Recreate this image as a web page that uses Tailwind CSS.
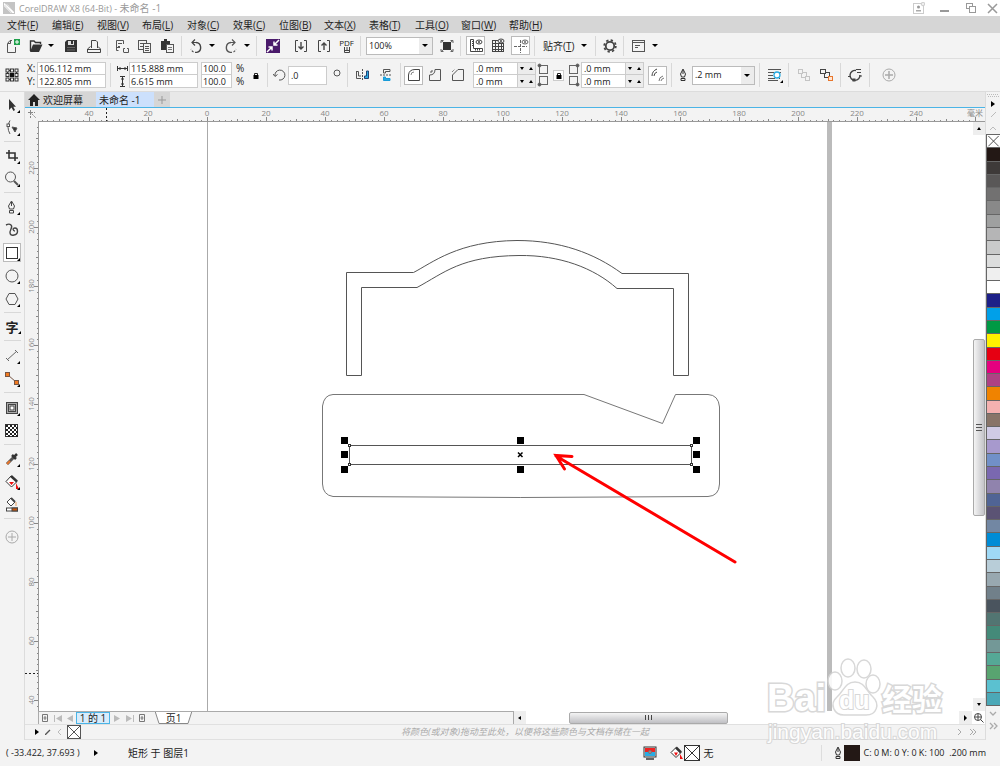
<!DOCTYPE html>
<html lang="zh-CN">
<head>
  <meta charset="UTF-8" />
  <title>CorelDRAW X8 (64-Bit) - 未命名 -1</title>
  <meta name="viewport" content="width=device-width, initial-scale=1.0">
  <script src="https://cdn.jsdelivr.net/npm/@tailwindcss/browser@4"></script>
</head>

<body class="relative flex h-screen flex-col overflow-hidden bg-[#f3f3f3] font-['Open_Sans','Noto_Sans_CJK_SC',sans-serif] text-[10px] leading-3 text-[#222]">

  <!-- 标题栏 -->
  <header class="flex h-4 shrink-0 items-center bg-white pl-[3px] text-[#999]">
    <svg class="mr-1 h-3 w-3" viewBox="0 0 12 12"><rect width="12" height="12" fill="#c4c4c4"/><path d="M1 1L5 3L11 10V11H8L1 4Z" fill="#fff"/><path d="M2 1.500L11 9M1.500 3L9 11" stroke="#bbb" stroke-width=".6"/></svg>
    <h1><span class="text-[9px]">CorelDRAW X8 (64-Bit) - </span>未命名 -1</h1>
    <div class="ml-auto flex items-center gap-[14px] pr-px">
      <button aria-label="登录"><svg class="h-3 w-3" viewBox="0 0 12 12" fill="none" stroke="#ccc"><rect x=".5" y="1.500" width="10" height="10"/><circle cx="5.500" cy="5" r="1.500" fill="#999" stroke="none"/><path d="M3 9.500V8H8V9.500Z" fill="#aaa" stroke="none"/><circle cx="10" cy="2" r="1.800" fill="#eee"/></svg></button>
      <button aria-label="最小化"><svg class="h-3 w-3" viewBox="0 0 12 12"><rect x="1" y="8" width="9" height="2" fill="#999"/></svg></button>
      <button aria-label="还原"><svg class="h-3 w-3" viewBox="0 0 12 12" fill="#fff" stroke="#999"><rect x="1.500" y="1.500" width="6" height="5"/><rect x="4.500" y="4.500" width="6" height="6"/></svg></button>
      <button aria-label="关闭" class="-ml-1"><svg class="h-3 w-3" viewBox="0 0 12 12" stroke="#999" stroke-width="1.500"><path d="M1 2L10 11M10 2L1 11"/></svg></button>
    </div>
  </header>

  <!-- 菜单 -->
  <nav class="flex h-[17px] shrink-0 items-center whitespace-nowrap bg-[#d6d6d6] pl-[7px]">
    <button class="w-[45px] text-left">文件(<u>F</u>)</button>
    <button class="w-[45px] text-left">编辑(<u>E</u>)</button>
    <button class="w-[45px] text-left">视图(<u>V</u>)</button>
    <button class="w-[45px] text-left">布局(<u>L</u>)</button>
    <button class="w-[46px] text-left">对象(<u>C</u>)</button>
    <button class="w-[46px] text-left">效果(<u>C</u>)</button>
    <button class="w-[45px] text-left">位图(<u>B</u>)</button>
    <button class="w-[45px] text-left">文本(<u>X</u>)</button>
    <button class="w-[46px] text-left">表格(<u>T</u>)</button>
    <button class="w-[46px] text-left">工具(<u>O</u>)</button>
    <button class="w-[48px] text-left">窗口(<u>W</u>)</button>
    <button class="w-[45px] text-left">帮助(<u>H</u>)</button>
  </nav>

  <!-- 标准工具栏 -->
  <div class="flex h-[26px] shrink-0 items-center border-b border-[#dedede] pl-px">
    <button aria-label="新建" class="flex w-[23px] justify-center"><svg class="h-4 w-4" viewBox="0 0 16 16" fill="none" stroke="#555"><path d="M7 2.500H5L2.500 5.500V14.500H10.500V9M5.500 3V5.500H3"/><rect x="9" y="1" width="6" height="6" fill="#1fa04b" stroke="none"/><path d="M12 2V6M10 4H14" stroke="#fff"/></svg></button>
    <button aria-label="打开" class="flex w-[23px] justify-center"><svg class="h-4 w-4" viewBox="0 0 16 16"><path d="M2.500 13V3H6L7.500 4.500H12.500V6" fill="none" stroke="#333" stroke-width="1.400"/><path d="M2 14L5 6.500H14.500L11 14Z" fill="#333"/></svg></button>
    <button aria-label="最近文件" class="flex w-3 justify-start pl-px"><svg class="h-[3px] w-[6px]" viewBox="0 0 6 3"><path d="M0 0H6L3 3Z"/></svg></button>
    <button aria-label="保存" class="flex w-[23px] justify-center"><svg class="h-4 w-4" viewBox="0 0 16 16"><path d="M2 4L4 2H14V14H2Z" fill="#333"/><rect x="5" y="3" width="6" height="4" fill="#ddd"/><rect x="8" y="3" width="2" height="3" fill="#333"/><path d="M4 9.500H12M4 12H12" stroke="#666"/></svg></button>
    <button aria-label="打印" class="flex w-[23px] justify-center"><svg class="h-4 w-4" viewBox="0 0 16 16" fill="none" stroke="#444"><path d="M5.500 10V2.500H10L11.500 4V10M4.500 8.500L1.500 11V14.500H14.500V11L12 8.500M2 11.500H14"/></svg></button>
    <i class="mx-[2px] h-5 w-px bg-[#d8d8d8]"></i>
    <button aria-label="剪切" class="flex w-[23px] justify-center"><svg class="h-4 w-4" viewBox="0 0 16 16" fill="none" stroke="#555"><path d="M4.500 12.500H2.500V2.500H9.500V6M4 5.500H8M4 8.500H6M2.500 9.500H6"/><path d="M9.500 14.500V10.500H11M13 10.500H14.500V14.500H10"/></svg></button>
    <button aria-label="复制" class="flex w-[23px] justify-center"><svg class="h-4 w-4" viewBox="0 0 16 16" fill="#f3f3f3" stroke="#555"><rect x="1.500" y="2.500" width="8" height="9"/><path d="M3 5.500H8M3 8.500H8"/><rect x="6.500" y="5.500" width="7" height="9"/><path d="M8 8.500H12M8 10.500H12M8 12.500H12"/></svg></button>
    <button aria-label="粘贴" class="flex w-[23px] justify-center"><svg class="h-4 w-4" viewBox="0 0 16 16"><path d="M1 3H4V1H7V3H10V12H1Z" fill="#333"/><rect x="6.500" y="6.500" width="7" height="8" fill="#f3f3f3" stroke="#555"/><path d="M8 9.500H12M8 11.500H12" stroke="#777"/></svg></button>
    <i class="mx-[2px] h-5 w-px bg-[#d8d8d8]"></i>
    <button aria-label="撤消" class="flex w-[23px] justify-center"><svg class="h-4 w-4" viewBox="0 0 16 16" fill="none" stroke="#444"><path d="M7 1.500L4 4.500L7 7.500M4.500 4.500H8" stroke-width="1.200"/><path d="M8 4.500A5 5 0 0 1 9 14.300" stroke-width="1.400"/><path d="M9 14.300A5 5 0 0 1 3 11" stroke-width="1.200" stroke-dasharray="2 1.500"/></svg></button>
    <button aria-label="撤消列表" class="flex w-3 justify-start pl-[2px]"><svg class="h-[3px] w-[6px]" viewBox="0 0 6 3"><path d="M0 0H6L3 3Z"/></svg></button>
    <button aria-label="重做" class="flex w-[23px] justify-center"><svg class="h-4 w-4" viewBox="0 0 16 16" fill="none" stroke="#555"><path d="M9 1.500L12 4.500L9 7.500M11.500 4.500H8" stroke-width="1.200"/><path d="M8 4.500A5 5 0 0 0 7 14.300" stroke-width="1.400"/><path d="M7 14.300A5 5 0 0 0 13 11" stroke-width="1.200" stroke-dasharray="2 1.500"/></svg></button>
    <button aria-label="重做列表" class="flex w-3 justify-start pl-[2px]"><svg class="h-[3px] w-[6px]" viewBox="0 0 6 3"><path d="M0 0H6L3 3Z"/></svg></button>
    <i class="mx-[2px] h-5 w-px bg-[#d8d8d8]"></i>
    <button aria-label="CONNECT" class="flex w-[27px] justify-center"><svg class="h-[14px] w-[14px]" viewBox="0 0 14 14"><rect width="14" height="14" fill="#4a1a6b"/><path d="M13 1L8 6M8 2.500V6H11.500M1 13L6 8M2.500 8H6V11.500" stroke="#fff" stroke-width="1.500" fill="none"/></svg></button>
    <button aria-label="导入" class="ml-[3px] flex w-[23px] justify-center"><svg class="h-4 w-4" viewBox="0 0 16 16" fill="none" stroke="#444"><path d="M5 2.500H2.500V13.500H5M11 2.500H13.500V13.500H11"/><path d="M8 4V11M5.500 8.500L8 11L10.500 8.500" stroke-width="1.400"/></svg></button>
    <button aria-label="导出" class="flex w-[23px] justify-center"><svg class="h-4 w-4" viewBox="0 0 16 16" fill="none" stroke="#444"><path d="M5 2.500H2.500V13.500H5M11 2.500H13.500V13.500H11"/><path d="M8 12V5M5.500 7.500L8 5L10.500 7.500" stroke-width="1.400"/></svg></button>
    <button aria-label="发布为 PDF" class="flex w-[23px] flex-col items-center"><span class="text-[8px] leading-[8px]">PDF</span><svg class="h-[6px] w-[8px]" viewBox="0 0 8 6" fill="none" stroke="#444"><path d="M1.500 0V5.500H6.500V0M4 0V4M2 3.500H6"/></svg></button>
    <i class="mx-[2px] h-5 w-px bg-[#d8d8d8]"></i>
    <div class="relative ml-[3px] flex h-[18px] w-[67px] items-center border border-[#bbb] bg-[#ececec]">
      <select aria-label="缩放级别" class="h-4 w-full appearance-none bg-linear-to-r from-white from-80% to-[#ececec] to-80% pl-[2px] text-[9px]"><option>100%</option></select>
      <svg class="pointer-events-none absolute right-1 h-[3px] w-[6px]" viewBox="0 0 6 3"><path d="M0 0H6L3 3Z"/></svg>
    </div>
    <button aria-label="全屏预览" class="ml-[2px] flex w-[23px] justify-center"><svg class="h-4 w-4" viewBox="0 0 16 16" fill="none" stroke="#666"><rect x="4" y="4" width="8" height="8" fill="#333" stroke="none"/><path d="M2 5V2.500H4.500M11.500 2.500H14V5M14 11V13.500H11.500M4.500 13.500H2V11M2 2.500L4 4M14 2.500L12 4M2 13.500L4 12M14 13.500L12 12"/></svg></button>
    <i class="mx-[2px] h-5 w-px bg-[#d8d8d8]"></i>
    <button aria-label="显示标尺" class="ml-[3px] flex h-[19px] w-[19px] items-center justify-center border border-[#bbb] bg-white"><svg class="h-4 w-4" viewBox="0 0 16 16" fill="none" stroke="#444"><path d="M2.500 1.500H5.500V10.500H14.500V13.500H2.500Z"/><path d="M4 3.500H5M4 5.500H5M4 7.500H5M7.500 11V12.500M9.500 11V12.500M11.500 11V12.500"/><ellipse cx="11" cy="4" rx="3" ry="2"/><circle cx="11" cy="4" r=".7"/></svg></button>
    <button aria-label="显示网格" class="flex w-[26px] justify-center"><svg class="h-4 w-4" viewBox="0 0 16 16" fill="none" stroke="#444"><path d="M2 2.500H8M2 5.500H14M2 8.500H14M2 11.500H14M2 13.500H14M2.500 2V14M5.500 2V14M8.500 6V14M11.500 6V14M13.500 6V14"/><ellipse cx="11" cy="3" rx="3" ry="2"/><circle cx="11" cy="3" r=".7"/></svg></button>
    <button aria-label="显示辅助线" class="flex h-[19px] w-[19px] items-center justify-center border border-[#bbb] bg-white"><svg class="h-4 w-4" viewBox="0 0 16 16" fill="none" stroke="#666"><path d="M7.500 2V15M1 8.500H14" stroke-dasharray="3 1"/><ellipse cx="12" cy="4" rx="3" ry="2"/><circle cx="12" cy="4" r=".7"/></svg></button>
    <i class="ml-1 mr-2 h-5 w-px bg-[#d8d8d8]"></i>
    <button class="flex items-center gap-[7px] whitespace-nowrap"><span>贴齐(<u>T</u>)</span><svg class="h-[3px] w-[6px]" viewBox="0 0 6 3"><path d="M0 0H6L3 3Z"/></svg></button>
    <i class="ml-2 mr-[2px] h-5 w-px bg-[#d8d8d8]"></i>
    <button aria-label="选项" class="flex w-[23px] justify-center"><svg class="h-4 w-4" viewBox="0 0 16 16" fill="none" stroke="#444"><circle cx="8" cy="8" r="4.200" stroke-width="1.800"/><circle cx="8" cy="8" r="5.800" stroke-width="1.800" stroke-dasharray="2.300 2.250"/></svg></button>
    <i class="mx-[2px] h-5 w-px bg-[#d8d8d8]"></i>
    <button aria-label="应用程序启动器" class="flex w-[23px] justify-center"><svg class="h-4 w-4" viewBox="0 0 16 16" fill="none" stroke="#555"><rect x="2.500" y="2.500" width="12" height="11"/><path d="M3 4.500H14M5 7.500H10M5 9.500H8"/></svg></button>
    <button aria-label="启动器列表" class="flex w-3 justify-center"><svg class="h-[3px] w-[6px]" viewBox="0 0 6 3"><path d="M0 0H6L3 3Z"/></svg></button>
  </div>

  <!-- 属性栏 -->
  <div class="flex h-[33px] shrink-0 items-center border-b border-[#dcdcdc] pl-[5px]">
    <svg class="h-[14px] w-[14px]" viewBox="0 0 14 14" fill="none" stroke="#333"><path d="M2 2.500H12M2 11.500H12M2.500 2V12M11.500 2V12" stroke-dasharray="1 1"/><g fill="#f3f3f3"><rect x="1" y="1" width="3" height="3"/><rect x="5.500" y="1" width="3" height="3"/><rect x="10" y="1" width="3" height="3"/><rect x="1" y="5.500" width="3" height="3"/><rect x="10" y="5.500" width="3" height="3"/><rect x="1" y="10" width="3" height="3"/><rect x="5.500" y="10" width="3" height="3"/><rect x="10" y="10" width="3" height="3"/></g><rect x="5" y="5" width="4" height="4" fill="#111" stroke="none"/></svg>
    <div class="ml-2 grid grid-cols-[10px_69px] items-center leading-[13px]">
      <label for="pos-x">X:</label><input id="pos-x" value="106.112 mm" class="h-[13px] min-w-0 border border-[#ccc] bg-white pl-px text-[9px]">
      <label for="pos-y">Y:</label><input id="pos-y" value="122.805 mm" class="h-[13px] min-w-0 border border-t-0 border-[#ccc] bg-white pl-px text-[9px]">
    </div>
    <i class="ml-1 mr-[6px] h-6 w-px bg-[#d8d8d8]"></i>
    <div class="grid grid-cols-[12px_69px_34px] items-center leading-[13px]">
      <svg class="h-[11px] w-[11px]" viewBox="0 0 11 11" stroke="#333" fill="none"><path d="M.5 3V8M10.500 3V8M1 5.500H10M3 4V7M8 4V7"/></svg>
      <input aria-label="宽度" value="115.888 mm" class="h-[13px] min-w-0 border border-[#ccc] bg-white pl-px text-[9px]">
      <input aria-label="水平缩放" value="100.0" class="ml-[3px] h-[13px] min-w-0 border border-[#ccc] bg-white pl-px text-[9px]">
      <svg class="h-[11px] w-[11px]" viewBox="0 0 11 11" stroke="#333" fill="none"><path d="M3 .5H8M3 10.500H8M5.500 1V10M4 3H7M4 8H7"/></svg>
      <input aria-label="高度" value="6.615 mm" class="h-[13px] min-w-0 border border-t-0 border-[#ccc] bg-white pl-px text-[9px]">
      <input aria-label="垂直缩放" value="100.0" class="ml-[3px] h-[13px] min-w-0 border border-t-0 border-[#ccc] bg-white pl-px text-[9px]">
    </div>
    <div class="ml-1 w-3 leading-[13px]">%<br>%</div>
    <button aria-label="锁定比率" class="flex w-4 justify-center"><svg class="h-[7px] w-[6px]" viewBox="0 0 6 7"><rect x=".5" y="3" width="5" height="4"/><path d="M1.500 3V1.500H4.500V3" fill="none" stroke="#222"/></svg></button>
    <i class="mx-[3px] h-6 w-px bg-[#d8d8d8]"></i>
    <svg class="ml-[2px] h-[14px] w-[14px]" viewBox="0 0 14 14" fill="none" stroke="#555"><path d="M2 8A5 5 0 1 1 6 12M0 6L2 8.500L4.500 6.500"/></svg>
    <input aria-label="旋转角度" value=".0" class="ml-px h-[19px] w-[39px] border border-[#ccc] bg-white pl-[2px] text-[9px]">
    <svg class="mx-[6px] mb-1 h-2 w-2" viewBox="0 0 8 8"><circle cx="4" cy="4" r="3" fill="none" stroke="#555"/></svg>
    <i class="h-6 w-px bg-[#d8d8d8]"></i>
    <button aria-label="水平镜像" class="ml-[3px] flex w-[23px] justify-center"><svg class="h-4 w-4" viewBox="0 0 16 16" fill="none" stroke="#555"><path d="M7.500 2V14" stroke-dasharray="2 1"/><path d="M1.500 4V11.500H6M1.500 4.500H3.500V9H6"/><path d="M13.500 4V11.500H9.500V9H11.500V4Z" fill="#29abe2" stroke="#247"/></svg></button>
    <button aria-label="垂直镜像" class="flex w-[23px] justify-center"><svg class="h-4 w-4" viewBox="0 0 16 16" fill="none" stroke="#555"><path d="M2 8H14" stroke-dasharray="2 1"/><path d="M12 2.500H5.500V6H7.500V4.500H12Z"/><path d="M12 13.500H5.500V10H7.500V11.500H12Z" fill="#29abe2" stroke="#189bd8"/></svg></button>
    <i class="mx-[3px] h-6 w-px bg-[#d8d8d8]"></i>
    <button aria-label="圆角" class="flex h-[19px] w-[19px] items-center justify-center border border-[#bbb] bg-white"><svg class="h-4 w-4" viewBox="0 0 16 16" fill="none" stroke="#444"><path d="M2.500 13.500V8Q3 2.500 9 2.500H13.500V13.500Z"/><path d="M5 8Q5 5 8 5" stroke="#888"/></svg></button>
    <button aria-label="扇形角" class="flex w-[23px] justify-center"><svg class="h-4 w-4" viewBox="0 0 16 16" fill="none" stroke="#555"><path d="M2.500 13.500V8Q8 8 8 2.500H13.500V13.500H2.500M3 5H5V3" /></svg></button>
    <button aria-label="倒棱角" class="flex w-[23px] justify-center"><svg class="h-4 w-4" viewBox="0 0 16 16" fill="none" stroke="#555"><path d="M2.500 13.500V8L8 2.500H13.500V13.500Z"/><path d="M2 5L5 2" stroke-dasharray="1 1"/></svg></button>
    <div class="ml-1 grid grid-cols-[45px_18px]">
      <input aria-label="左上角半径" value=".0 mm" class="h-[13px] min-w-0 border border-[#ccc] bg-white pl-[2px] text-[9px]">
      <div class="flex items-center justify-around border border-l-0 border-[#ccc] bg-[#ececec]"><button aria-label="减小"><svg class="h-[3px] w-1" viewBox="0 0 4 3"><path d="M0 0H4L2 3Z"/></svg></button><button aria-label="增大"><svg class="h-[3px] w-1" viewBox="0 0 4 3"><path d="M0 3H4L2 0Z"/></svg></button></div>
      <input aria-label="左下角半径" value=".0 mm" class="h-[13px] min-w-0 border border-t-0 border-[#ccc] bg-white pl-[2px] text-[9px]">
      <div class="flex items-center justify-around border border-l-0 border-t-0 border-[#ccc] bg-[#ececec]"><button aria-label="减小"><svg class="h-[3px] w-1" viewBox="0 0 4 3"><path d="M0 0H4L2 3Z"/></svg></button><button aria-label="增大"><svg class="h-[3px] w-1" viewBox="0 0 4 3"><path d="M0 3H4L2 0Z"/></svg></button></div>
    </div>
    <svg class="ml-px h-6 w-3" viewBox="0 0 12 24" fill="none" stroke="#666"><rect x="2.500" y="2.500" width="8" height="8"/><rect x="2.500" y="13.500" width="8" height="8"/><circle cx="2.500" cy="2.500" r="1.500" fill="#555"/><circle cx="2.500" cy="21.500" r="1.500" fill="#555"/></svg>
    <button aria-label="同时编辑所有角" class="mx-1 flex h-[11px] w-[11px] items-center justify-center border border-[#ccc] bg-white"><svg class="h-[7px] w-[6px]" viewBox="0 0 6 7"><rect x=".5" y="3" width="5" height="4"/><path d="M1.500 3V1.500H4.500V3" fill="none" stroke="#222"/></svg></button>
    <svg class="h-6 w-3" viewBox="0 0 12 24" fill="none" stroke="#666"><rect x="1.500" y="2.500" width="8" height="8"/><rect x="1.500" y="13.500" width="8" height="8"/><circle cx="9.500" cy="2.500" r="1.500" fill="#555"/><circle cx="9.500" cy="21.500" r="1.500" fill="#555"/></svg>
    <div class="ml-px grid grid-cols-[45px_18px]">
      <input aria-label="右上角半径" value=".0 mm" class="h-[13px] min-w-0 border border-[#ccc] bg-white pl-[2px] text-[9px]">
      <div class="flex items-center justify-around border border-l-0 border-[#ccc] bg-[#ececec]"><button aria-label="减小"><svg class="h-[3px] w-1" viewBox="0 0 4 3"><path d="M0 0H4L2 3Z"/></svg></button><button aria-label="增大"><svg class="h-[3px] w-1" viewBox="0 0 4 3"><path d="M0 3H4L2 0Z"/></svg></button></div>
      <input aria-label="右下角半径" value=".0 mm" class="h-[13px] min-w-0 border border-t-0 border-[#ccc] bg-white pl-[2px] text-[9px]">
      <div class="flex items-center justify-around border border-l-0 border-t-0 border-[#ccc] bg-[#ececec]"><button aria-label="减小"><svg class="h-[3px] w-1" viewBox="0 0 4 3"><path d="M0 0H4L2 3Z"/></svg></button><button aria-label="增大"><svg class="h-[3px] w-1" viewBox="0 0 4 3"><path d="M0 3H4L2 0Z"/></svg></button></div>
    </div>
    <button aria-label="相对角缩放" class="ml-1 flex h-[19px] w-[19px] items-center justify-center border border-[#bbb] bg-white"><svg class="h-4 w-4" viewBox="0 0 16 16" fill="none" stroke="#444"><path d="M2 9Q2 4 7 2M4 9Q4 6 7 5"/><path d="M9 14Q9 10 13 9M11 14Q11 12 14 11" stroke="#777"/></svg></button>
    <i class="mx-1 h-6 w-px bg-[#d8d8d8]"></i>
    <svg class="ml-[3px] h-[14px] w-2" viewBox="0 0 8 14" fill="none" stroke="#333"><path d="M4 1L6.500 6L5.500 9H2.500L1.500 6ZM4 2V6M2 10.500H6V12.500H2Z"/></svg>
    <div class="relative ml-[5px] flex h-[19px] w-[63px] items-center border border-[#bbb] bg-[#ececec]">
      <select aria-label="轮廓宽度" class="h-[17px] w-full appearance-none bg-linear-to-r from-white from-78% to-[#ececec] to-78% pl-[2px] text-[9px]"><option>.2 mm</option></select>
      <svg class="pointer-events-none absolute right-1 h-[3px] w-[6px]" viewBox="0 0 6 3"><path d="M0 0H6L3 3Z"/></svg>
    </div>
    <i class="mx-1 h-6 w-px bg-[#d8d8d8]"></i>
    <button aria-label="文本换行" class="flex w-[21px] justify-center"><svg class="h-4 w-4" viewBox="0 0 16 16" fill="none" stroke="#555"><path d="M1 2.500H14M1 5.500H7M1 8.500H6M1 11.500H8M1 13.500H11M12 5.500H14M12 11.500H13"/><circle cx="10" cy="8" r="3" fill="#fff" stroke="#29abe2" stroke-width="1.300"/><path d="M16 13V16H13Z" fill="#000" stroke="none"/></svg></button>
    <i class="mx-[3px] h-6 w-px bg-[#d8d8d8]"></i>
    <button aria-label="到图层前面" class="flex w-[23px] justify-center"><svg class="h-4 w-4" viewBox="0 0 16 16" fill="#f3f3f3" stroke="#c4c4c4"><rect x="5.500" y="5.500" width="5" height="5"/><rect x="2.500" y="2.500" width="4" height="4"/><rect x="9.500" y="9.500" width="4" height="4"/></svg></button>
    <button aria-label="到图层后面" class="flex w-[23px] justify-center"><svg class="h-4 w-4" viewBox="0 0 16 16" fill="#f3f3f3" stroke="#444"><rect x="5.500" y="5.500" width="5" height="5"/><rect x="1.500" y="2.500" width="5" height="4"/><rect x="9.500" y="9.500" width="4" height="4" fill="#ffe4d0" stroke="#e8762c"/></svg></button>
    <i class="mx-[2px] h-6 w-px bg-[#d8d8d8]"></i>
    <button aria-label="转换为曲线" class="flex w-6 justify-center"><svg class="h-4 w-4" viewBox="0 0 16 16" fill="none" stroke="#444"><path d="M9 3.500A5 5 0 1 0 13 8" stroke-width="1.400"/><path d="M9 2.500H14M10 5.500H14M1 9.500H4M12 9H15" /><rect x="6" y="12" width="2" height="2" fill="#444"/></svg></button>
    <i class="mx-[2px] h-6 w-px bg-[#d8d8d8]"></i>
    <button aria-label="快速自定义" class="ml-[3px] flex w-[27px] justify-center"><svg class="h-[14px] w-[14px]" viewBox="0 0 14 14" fill="none" stroke="#aaa"><circle cx="7" cy="7" r="6"/><path d="M7 3V11M3 7H11" stroke-width="1.500"/></svg></button>
  </div>

  <div class="flex min-h-0 flex-1">

    <!-- 工具箱 -->
    <aside class="flex w-[25px] shrink-0 flex-col items-center border-r border-[#dcdcdc] pt-px">
      <button aria-label="选择工具" class="flex h-[23px] shrink-0 items-center"><svg class="h-[18px] w-[18px]" viewBox="0 0 18 18"><path d="M6 3V14L8.500 11.500L10.500 15L12 14L10.300 10.800H13Z" fill="#333"/><path d="M17 14V17H14Z"/></svg></button>
      <button aria-label="形状工具" class="flex h-[23px] shrink-0 items-center"><svg class="h-[18px] w-[18px]" viewBox="0 0 18 18" fill="none" stroke="#555"><path d="M7 1.500Q3 8 7 15"/><rect x="4" y="5" width="2.500" height="2.500" fill="#fff"/><path d="M9 8L14 9L12 13Z" fill="#333"/><path d="M17 14V17H14Z" fill="#000" stroke="none"/></svg></button>
      <i class="my-[2px] h-px w-[17px] shrink-0 bg-[#d8d8d8]"></i>
      <button aria-label="裁剪工具" class="flex h-[23px] shrink-0 items-center"><svg class="h-[18px] w-[18px]" viewBox="0 0 18 18" fill="none" stroke="#333" stroke-width="1.600"><path d="M6 3V11H15M3 6H12V14"/><path d="M17 14V17H14Z" fill="#000" stroke="none"/></svg></button>
      <button aria-label="缩放工具" class="flex h-[23px] shrink-0 items-center"><svg class="h-[18px] w-[18px]" viewBox="0 0 18 18" fill="none" stroke="#555"><circle cx="7.500" cy="7" r="5"/><path d="M11 11L15 15" stroke-width="2"/><path d="M17 14V17H14Z" fill="#000" stroke="none"/></svg></button>
      <i class="my-[2px] h-px w-[17px] shrink-0 bg-[#d8d8d8]"></i>
      <button aria-label="钢笔工具" class="flex h-[23px] shrink-0 items-center"><svg class="h-[18px] w-[18px]" viewBox="0 0 18 18" fill="none" stroke="#444"><path d="M8.500 3L11.500 8L10.500 11H6.500L5.500 8ZM8.500 4V8M6.500 12.500H10.500V15H6.500Z"/><path d="M17 14V17H14Z" fill="#000" stroke="none"/></svg></button>
      <button aria-label="手绘工具" class="flex h-[23px] shrink-0 items-center"><svg class="h-[18px] w-[18px]" viewBox="0 0 18 18" fill="none" stroke="#444" stroke-width="1.400"><path d="M3 4C7 2 10 4 8 8C6 12 7 15 11 14C16 13 15 7 12 7C9 7 10 10 12 10"/></svg></button>
      <button aria-label="矩形工具" class="my-[2px] flex h-[19px] w-[18px] shrink-0 items-center border border-[#bbb] bg-white"><svg class="h-4 w-4" viewBox="1 1 16 16" fill="none" stroke="#333"><rect x="3.500" y="3.500" width="11" height="11"/><path d="M17 14V17H14Z" fill="#000" stroke="none"/></svg></button>
      <button aria-label="椭圆形工具" class="flex h-[23px] shrink-0 items-center"><svg class="h-[18px] w-[18px]" viewBox="0 0 18 18" fill="none" stroke="#555"><circle cx="9" cy="9" r="6"/><path d="M17 14V17H14Z" fill="#000" stroke="none"/></svg></button>
      <button aria-label="多边形工具" class="flex h-[23px] shrink-0 items-center"><svg class="h-[18px] w-[18px]" viewBox="0 0 18 18" fill="none" stroke="#555"><path d="M6 3.500H12L15 9L12 14.500H6L3 9Z"/><path d="M17 14V17H14Z" fill="#000" stroke="none"/></svg></button>
      <i class="my-[2px] h-px w-[17px] shrink-0 bg-[#d8d8d8]"></i>
      <button aria-label="文本工具" class="relative flex h-[23px] w-[18px] shrink-0 items-center justify-center text-[13px] font-bold">字<svg class="absolute bottom-1 right-0 h-[3px] w-[3px]" viewBox="0 0 3 3"><path d="M3 0V3H0Z"/></svg></button>
      <i class="mb-[3px] mt-[2px] h-px w-[17px] shrink-0 bg-[#d8d8d8]"></i>
      <button aria-label="平行度量工具" class="flex h-[23px] shrink-0 items-center"><svg class="h-[18px] w-[18px]" viewBox="0 0 18 18" fill="none" stroke="#666"><path d="M4 13L14 4M3 11L6 14M12 3L15 6"/><path d="M17 14V17H14Z" fill="#000" stroke="none"/></svg></button>
      <button aria-label="直线连接器工具" class="flex h-[23px] shrink-0 items-center"><svg class="h-[18px] w-[18px]" viewBox="0 0 18 18" fill="#f07a20" stroke="#754"><path d="M5 5L13 12"/><rect x="2.500" y="2.500" width="4" height="4"/><rect x="11.500" y="10.500" width="4" height="4"/><path d="M17 14V17H14Z" fill="#000" stroke="none"/></svg></button>
      <i class="mb-[3px] mt-[2px] h-px w-[17px] shrink-0 bg-[#d8d8d8]"></i>
      <button aria-label="轮廓图工具" class="flex h-[23px] shrink-0 items-center"><svg class="h-[18px] w-[18px]" viewBox="0 0 18 18" fill="#aaa" stroke="#444"><rect x="3.500" y="3.500" width="11" height="11"/><rect x="5.500" y="5.500" width="7" height="7" fill="#ddd"/><rect x="7" y="7" width="4" height="4" fill="#fff"/><path d="M17 14V17H14Z" fill="#000" stroke="none"/></svg></button>
      <button aria-label="透明度工具" class="flex h-[23px] shrink-0 items-center"><svg class="h-[18px] w-[18px]" viewBox="0 0 18 18"><rect x="2.500" y="2.500" width="12" height="12" fill="#fff" stroke="#333"/><path d="M3 4H15M3 8H15M3 12H15" stroke="#222" stroke-width="2" stroke-dasharray="2 2"/><path d="M5 6H15M5 10H15M5 14H15" stroke="#222" stroke-width="2" stroke-dasharray="2 2"/></svg></button>
      <i class="my-[2px] h-px w-[17px] shrink-0 bg-[#d8d8d8]"></i>
      <button aria-label="颜色滴管工具" class="flex h-[23px] shrink-0 items-center"><svg class="h-[18px] w-[18px]" viewBox="0 0 18 18" fill="none"><path d="M4 14L11 7" stroke="#555" stroke-width="3"/><path d="M4 14L7 11" stroke="#e8762c" stroke-width="2"/><path d="M9 5L13 9M11 7L14 4" stroke="#333" stroke-width="2.500"/><path d="M17 14V17H14Z" fill="#000"/></svg></button>
      <button aria-label="交互式填充工具" class="flex h-[23px] shrink-0 items-center"><svg class="h-[18px] w-[18px]" viewBox="0 0 18 18" fill="#fff" stroke="#333"><path d="M8 3L14 8.500L8.500 14L3 8.500Z"/><path d="M8 3L14 8.500" stroke-width="2.500"/><path d="M6 9H11L8.500 12ZM13 10L16 16H13Z" fill="#e11" stroke="none"/><path d="M17 14V17H14Z" fill="#000" stroke="none"/></svg></button>
      <button aria-label="智能填充工具" class="flex h-[23px] shrink-0 items-center"><svg class="h-[18px] w-[18px]" viewBox="0 0 18 18" fill="#fff" stroke="#444"><path d="M8 2L12 6L8 10L4 6Z"/><path d="M8 2L12 6" stroke-width="2"/><path d="M13 6V10" stroke="#e8a060"/><rect x="3.500" y="12" width="11" height="3"/><rect x="9" y="12" width="5.500" height="3" fill="#c8540c"/></svg></button>
      <i class="my-[2px] h-px w-[17px] shrink-0 bg-[#d8d8d8]"></i>
      <button aria-label="自定义工具箱" class="mt-1 flex h-[23px] shrink-0 items-center"><svg class="h-[14px] w-[14px]" viewBox="0 0 14 14" fill="none" stroke="#aaa"><circle cx="7" cy="7" r="6"/><path d="M7 3V11M3 7H11"/></svg></button>
    </aside>

    <main class="flex min-w-0 flex-1 flex-col">
      <!-- 文档标签 -->
      <div class="flex h-4 shrink-0 items-stretch border-b border-[#4ab4e6] bg-[#e8e8e8]">
        <button class="flex w-[71px] items-center gap-[3px] bg-[#d6d6d6] pl-[3px]"><svg class="h-3 w-3" viewBox="0 0 12 12" fill="#222"><path d="M6 0L12 6H10V12H7V8H5V12H2V6H0Z"/></svg>欢迎屏幕</button>
        <button class="w-[58px] bg-[#cce0fc] pl-[3px] text-left">未命名 -1</button>
        <button aria-label="新建文档" class="flex w-4 items-center justify-center bg-[#d6d6d6]"><svg class="h-2 w-2" viewBox="0 0 8 8" stroke="#999"><path d="M4 0V8M0 4H8"/></svg></button>
      </div>

      <!-- 水平标尺 -->
      <div class="flex h-[14px] shrink-0">
        <svg class="h-[13px] w-[13px] shrink-0" viewBox="0 0 13 13" fill="none" stroke="#888"><path d="M3 4.500H10M5.500 2V10M5 4L11 10" stroke-dasharray="2 1"/></svg>
        <svg id="ruler-h" class="h-full min-w-0 flex-1 border-b border-[#999] font-['Open_Sans','Noto_Sans_CJK_SC',sans-serif] text-[8px]" fill="#888"></svg>
      </div>

      <div class="flex min-h-0 flex-1">
        <svg id="ruler-v" class="h-full w-[14px] shrink-0 border-r border-[#999] font-['Open_Sans',sans-serif] text-[8px]" fill="#888"></svg>

        <!-- 绘图区 -->
        <svg class="h-full min-w-0 flex-1 bg-white" fill="none">
          <g transform="translate(-39 -122)">
            <path d="M207.500 122V900" stroke="#aaa"/>
            <rect x="827" y="122" width="5" height="900" fill="#bbb"/>
            <g stroke="#555">
              <path d="M346.500 375.500V272.500H413.500C432 263 458 241 517 240.500C560 240.500 594 253 622 273.500H688.500V375.500H673.500V288.500H617C594 268 560 255 519 255.500C461 256 444 273 417 287.500H361.500V375.500Z"/>
              <path d="M333 394.500H584L662.500 423.500L675.500 394.500H708Q718.500 395 719.500 407V484Q719 496 708 496.500Q520 498.500 333 496.500Q323 495 322.500 484V406Q324 395 333 394.500Z" stroke="#777"/>
              <rect x="349.500" y="445.500" width="342" height="19"/>
            </g>
            <g fill="#fff" stroke="#333">
              <rect x="348.500" y="444.500" width="2" height="2"/><rect x="690.500" y="444.500" width="2" height="2"/>
              <rect x="348.500" y="463.500" width="2" height="2"/><rect x="690.500" y="463.500" width="2" height="2"/>
            </g>
            <g fill="#000">
              <rect x="341" y="437" width="7" height="7"/><rect x="517" y="437" width="7" height="7"/><rect x="693" y="437" width="7" height="7"/>
              <rect x="341" y="451" width="7" height="7"/><rect x="693" y="451" width="7" height="7"/>
              <rect x="341" y="466" width="7" height="7"/><rect x="517" y="466" width="7" height="7"/><rect x="693" y="466" width="7" height="7"/>
            </g>
            <path d="M518 452.500L522.500 457M522.500 452.500L518 457" stroke="#000" stroke-width="1.500"/>
            <path d="M735 562L556 456M572 456.500L556 455.500L564.500 469" stroke="#f00" stroke-width="3" stroke-linecap="round"/>
          </g>
        </svg>

        <!-- 垂直滚动条 -->
        <div class="flex w-[13px] shrink-0 flex-col items-end bg-white">
          <button aria-label="向上滚动" class="flex h-[13px] w-3 items-center justify-center bg-[#eee]"><svg class="h-[3px] w-1" viewBox="0 0 4 3"><path d="M0 3H4L2 0Z"/></svg></button>
          <div class="flex w-full flex-[204]"></div>
          <div class="flex w-3 flex-[176] items-center justify-center rounded-[2px] border border-[#aaa] bg-linear-to-r from-[#f4f4f4] to-[#c4c4c8]"><svg class="h-[7px] w-[6px]" viewBox="0 0 6 7" stroke="#555"><path d="M0 .5H6M0 3.500H6M0 6.500H6"/></svg></div>
          <div class="flex w-full flex-[182]"></div>
          <button aria-label="向下滚动" class="flex h-[13px] w-3 items-center justify-center bg-[#eee]"><svg class="h-[3px] w-1" viewBox="0 0 4 3"><path d="M0 0H4L2 3Z"/></svg></button>
        </div>
      </div>

      <!-- 页面导航 -->
      <div class="flex h-[13px] shrink-0 items-stretch pl-[13px]">
        <div class="flex flex-[475] items-center overflow-hidden whitespace-nowrap border-l border-r border-t border-[#aaa]">
          <button aria-label="在前面添加页" class="flex w-3 justify-center"><svg class="h-2 w-2" viewBox="0 0 8 8" fill="none" stroke="#777"><path d="M1.500 .5H6.500V7.500H1.500ZM4 2V6M2.500 4H5.500"/></svg></button>
          <button aria-label="第一页" class="flex w-[13px] justify-center"><svg class="h-[7px] w-2" viewBox="0 0 8 7" fill="#bbb"><path d="M0 0H1V7H0ZM8 0V7L2 3.500Z"/></svg></button>
          <button aria-label="上一页" class="flex w-3 justify-center"><svg class="h-[7px] w-[6px]" viewBox="0 0 6 7" fill="#bbb"><path d="M6 0V7L0 3.500Z"/></svg></button>
          <span class="flex h-3 w-[34px] items-center justify-center border border-[#4ab4e6] bg-[#d9ecfb]">1 的 1</span>
          <button aria-label="下一页" class="flex w-[13px] justify-center"><svg class="h-[7px] w-[6px]" viewBox="0 0 6 7" fill="#bbb"><path d="M0 0V7L6 3.500Z"/></svg></button>
          <button aria-label="最后一页" class="flex w-[13px] justify-center"><svg class="h-[7px] w-2" viewBox="0 0 8 7" fill="#bbb"><path d="M7 0H8V7H7ZM0 0V7L6 3.500Z"/></svg></button>
          <button aria-label="在后面添加页" class="flex w-3 justify-center"><svg class="h-2 w-2" viewBox="0 0 8 8" fill="none" stroke="#777"><path d="M1.500 .5H6.500V7.500H1.500ZM4 2V6M2.500 4H5.500"/></svg></button>
          <button class="relative ml-[7px] flex h-3 w-[37px] items-center justify-center"><svg class="absolute inset-0 h-full w-full" viewBox="0 0 37 12"><path d="M0 -1L4 11.500H33L37 -1Z" fill="#fff" stroke="#888"/></svg><span class="relative">页1</span></button>
        </div>
        <div class="flex flex-[459] items-center bg-white">
          <button aria-label="向左滚动" class="flex h-full w-3 shrink-0 items-center justify-center bg-[#eee]"><svg class="h-1 w-[3px]" viewBox="0 0 3 4"><path d="M3 0V4L0 2Z"/></svg></button>
          <div class="flex-[43]"></div>
          <div class="flex h-3 flex-[158] items-center justify-center rounded-[2px] border border-[#aaa] bg-linear-to-b from-[#f4f4f4] to-[#c0c0c4]"><svg class="h-[5px] w-[7px]" viewBox="0 0 7 5" stroke="#444"><path d="M.5 0V5M3.500 0V5M6.500 0V5"/></svg></div>
          <div class="flex-[233]"></div>
          <button aria-label="向右滚动" class="flex h-full w-[13px] shrink-0 items-center justify-center bg-[#eee]"><svg class="h-[6px] w-[3px]" viewBox="0 0 3 6"><path d="M0 0V6L3 3Z"/></svg></button>
        </div>
        <button aria-label="导航器" class="flex w-[13px] shrink-0 items-center justify-center bg-white"><svg class="h-[10px] w-[10px]" viewBox="0 0 10 10" fill="none" stroke="#444"><circle cx="4" cy="4" r="3.500"/><path d="M4 1V7M1 4H7M6.500 6.500L9.500 9.500"/></svg></button>
      </div>

      <!-- 文档调色板 -->
      <div class="flex h-4 shrink-0 items-center border-b border-t border-[#e0e0e0] pl-[10px]">
        <svg class="h-[6px] w-1" viewBox="0 0 4 6"><path d="M0 0V6L4 3Z"/></svg>
        <svg class="ml-[6px] h-[6px] w-[6px]" viewBox="0 0 6 6" stroke="#555" stroke-width="1.300"><path d="M0 6L5 1"/></svg>
        <svg class="ml-[6px] h-[6px] w-[5px]" viewBox="0 0 5 6" fill="none" stroke="#bbb"><path d="M4 0L1 3L4 6"/></svg>
        <button aria-label="无颜色" class="ml-[5px]"><svg class="h-[14px] w-[14px]" viewBox="0 0 14 14" fill="#fff" stroke="#555"><rect x=".5" y=".5" width="13" height="13"/><path d="M1 1L13 13M13 1L1 13"/></svg></button>
        <p class="flex-1 pl-3 text-center text-[9px] italic text-[#aaa]">将颜色(或对象)拖动至此处，以便将这些颜色与文档存储在一起</p>
        <svg class="mr-2 h-2 w-[20px] shrink-0" viewBox="0 0 20 8" fill="none" stroke="#aaa"><path d="M1 1L4 4L1 7M13 1L16 4L13 7M16 1L19 4L16 7"/></svg>
      </div>
    </main>

    <!-- 调色板 -->
    <aside class="flex w-[15px] shrink-0 flex-col items-center border-l border-[#dcdcdc]">
      <svg class="h-[42px] w-[14px] shrink-0" viewBox="0 0 14 42" fill="none" stroke="#bbb"><path d="M1 2.500H13M2 4.500H13" stroke-dasharray="1 1"/><path d="M5 9V15L9 12Z" fill="#000" stroke="none"/><path d="M5 25L10 20M4 38L7 35L10 38"/></svg>
      <div id="palette" class="flex min-h-0 w-full flex-1 flex-col border-b border-l border-[#666]"></div>
      <svg class="h-[34px] w-[14px] shrink-0" viewBox="0 0 14 34" fill="none" stroke="#aaa" stroke-width="1.300"><path d="M4 6L7 9L10 6M4 17L7 20L4 23M8 17L11 20L8 23"/></svg>
    </aside>
  </div>

  <!-- 状态栏 -->
  <footer class="flex h-[26px] shrink-0 items-center whitespace-nowrap pl-[6px] pr-[14px]">
    <span class="w-[88px] text-[9px]">( -33.422, 37.693 )</span>
    <svg class="h-[6px] w-1" viewBox="0 0 4 6"><path d="M0 0V6L4 3Z"/></svg>
    <span class="ml-[30px]">矩形 于 图层1</span>
    <div class="ml-auto flex items-center">
      <svg class="h-[14px] w-[14px]" viewBox="0 0 14 14"><rect x="1" y="1" width="12" height="10" fill="#eee" stroke="#333"/><rect x="2" y="2" width="10" height="4" fill="#e22"/><rect x="2" y="6" width="10" height="4" fill="#29abe2"/><circle cx="7" cy="6" r="1.500" fill="#a88" stroke="#777"/><path d="M3 13H11" stroke="#333" stroke-width="1.500"/></svg>
      <svg class="ml-[13px] h-[14px] w-[14px]" viewBox="0 0 14 14" fill="#fff" stroke="#333"><path d="M6 1.500L11 6.500L6 11.500L1 6.500Z"/><path d="M6 1.500L11 6.500" stroke-width="2.500"/><path d="M4 6.500H8L6 10ZM10 8L13 13H10Z" fill="#e11" stroke="none"/></svg>
      <svg class="h-4 w-4" viewBox="0 0 16 16" fill="#fff" stroke="#333"><rect x=".5" y=".5" width="15" height="15"/><path d="M1 1L15 15M15 1L1 15"/></svg>
      <span class="ml-1 w-[117px]">无</span>
      <i class="h-4 w-px bg-[#ddd]"></i>
      <svg class="ml-3 h-[14px] w-2" viewBox="0 0 8 14" fill="none" stroke="#333"><path d="M4 1L6.500 6L5.500 9H2.500L1.500 6ZM4 2V6M2 10.500H6V12.500H2Z"/></svg>
      <span class="ml-[2px] h-4 w-4 bg-[#231815]"></span>
      <span class="ml-1 whitespace-pre text-[9px]">C: 0 M: 0 Y: 0 K: 100  .200 mm</span>
    </div>
  </footer>

  <!-- 水印 -->
  <svg class="pointer-events-none absolute bottom-5 right-[50px] h-[92px] w-[186px] font-['Liberation_Sans','Noto_Sans_CJK_SC',sans-serif] opacity-90" viewBox="0 0 186 92" fill="#fff" stroke="#d4d4d4" stroke-width="2" paint-order="stroke">
    <text x="3" y="57" font-size="38" font-weight="700" stroke-width="3">Bai</text>
    <g paint-order="normal" stroke-width="1.500">
      <ellipse cx="84" cy="14" rx="7" ry="9"/><ellipse cx="100" cy="15" rx="7" ry="9"/><ellipse cx="71" cy="27" rx="7" ry="9"/><ellipse cx="109" cy="30" rx="7" ry="9"/>
      <path d="M91 28C81 28 80 37 73 43C65 50 70 61 80 61H102C113 61 116 50 109 43C102 37 101 28 91 28Z"/>
    </g>
    <text x="75" y="55" font-size="25" font-weight="700">du</text>
    <text x="118" y="56" font-size="30" font-weight="700" stroke-width="3">经验</text>
    <text x="4" y="85" font-size="21">jingyan.baidu.com</text>
  </svg>

  <script>
    const NS = "http://www.w3.org/2000/svg";
    const MM = 2.955; // 每毫米像素

    function add(parent, tag, attrs, text) {
      const el = document.createElementNS(NS, tag);
      for (const k in attrs) el.setAttribute(k, attrs[k]);
      if (text) el.textContent = text;
      parent.appendChild(el);
    }

    const h = document.getElementById("ruler-h");
    for (let mm = -56; mm <= 260; mm += 2) {
      const x = Math.round(169 + mm * MM);
      const len = mm % 20 === 0 ? 4 : mm % 10 === 0 ? 2 : 1;
      add(h, "rect", { x: x, y: 13 - len, width: 1, height: len });
      if (mm % 20 === 0 && mm < 260) {
        add(h, "text", { x: x, y: 8, "text-anchor": "middle" }, String(Math.abs(mm)));
      }
    }
    add(h, "text", { x: 929, y: 8 }, "毫米");
    add(h, "path", { d: "M68.5 0V13", stroke: "#222", "stroke-dasharray": "2 2" });

    const v = document.getElementById("ruler-v");
    for (let mm = 36; mm <= 234; mm += 2) {
      const y = Math.round(46 + (220 - mm) * MM);
      const len = mm % 20 === 0 ? 4 : mm % 10 === 0 ? 2 : 1;
      add(v, "rect", { x: 13 - len, y: y, width: len, height: 1 });
      if (mm % 20 === 0) {
        add(v, "text", { transform: `translate(9 ${y}) rotate(-90)`, "text-anchor": "middle" }, String(mm));
      }
    }
    add(v, "path", { d: "M0 551.5H13", stroke: "#222", "stroke-dasharray": "2 2" });

    const colors = ["none", "#231815", "#3e3a39", "#595757", "#727171", "#898989", "#9fa0a0", "#b5b5b6", "#c9caca", "#dcdddd",
      "#efefef", "#ffffff", "#1d2088", "#00a0e9", "#009944", "#fff100", "#e60012", "#e4007f", "#ae4284", "#f08300",
      "#f4b1b0", "#887468", "#d0cbe5", "#a799cd", "#7190c8", "#7a68b0", "#9083ad", "#506495", "#5b5374", "#7287a3",
      "#008cd6", "#9fd9f6", "#b8cdd8", "#98a8b0", "#71808a", "#4a545e", "#527572", "#448a79", "#739897", "#55a896",
      "#58a470", "#5bc1d0", "#4ba8b7"];
    const palette = document.getElementById("palette");
    colors.forEach((c) => {
      const b = document.createElement("button");
      b.className = "min-h-0 w-full flex-1 border-t border-[#666]";
      b.setAttribute("aria-label", c);
      if (c === "none") {
        b.innerHTML = '<svg class="h-full w-full bg-white" viewBox="0 0 13 13" stroke="#444"><path d="M1 1L12 12M12 1L1 12"/></svg>';
      } else {
        b.style.background = c;
      }
      palette.appendChild(b);
    });
  </script>
</body>
</html>
